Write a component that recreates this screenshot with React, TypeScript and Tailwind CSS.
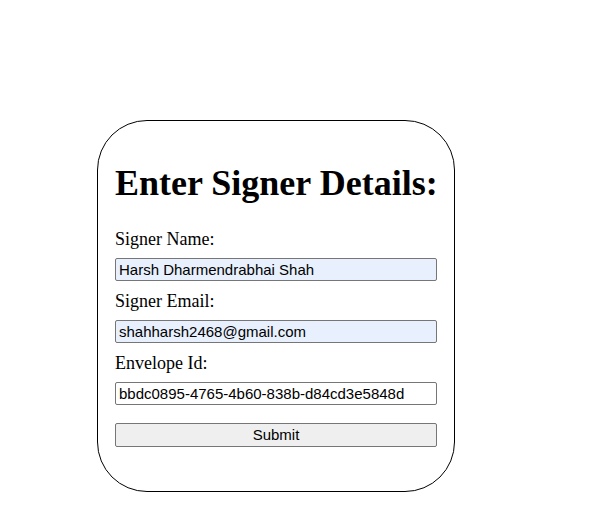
import React from "react";

export default function App() {
  const serif = { fontFamily: '"Liberation Serif", "Times New Roman", serif' };
  const sans = { fontFamily: '"Liberation Sans", Arial, sans-serif' };
  const inputCls =
    "block w-[322px] h-[23px] border border-[#767676] rounded-[2px] px-[3px] text-[15px] leading-[21px] text-black outline-none";
  return (
    <div className="min-h-[523px] bg-white pt-[120px] pl-[97px]">
      <div
        className="w-[358px] h-[372px] border border-black rounded-[50px] px-[17px] pt-[44px] pb-[43px] bg-white flex flex-col"
        style={serif}
      >
        <h1 className="text-[36px] leading-[36px] font-bold text-black m-0 whitespace-nowrap">Enter Signer Details:</h1>
        <div className="mt-[27px] text-[18px] leading-[22px] text-black">Signer Name:</div>
        <input
          className={inputCls + " mt-[8px] bg-[#e8f0fe]"}
          style={sans}
          defaultValue="Harsh Dharmendrabhai Shah"
        />
        <div className="mt-[9px] text-[18px] leading-[22px] text-black">Signer Email:</div>
        <input
          className={inputCls + " mt-[8px] bg-[#e8f0fe]"}
          style={sans}
          defaultValue="shahharsh2468@gmail.com"
        />
        <div className="mt-[9px] text-[18px] leading-[22px] text-black">Envelope Id:</div>
        <input
          className={inputCls + " mt-[8px] bg-white"}
          style={sans}
          defaultValue="bbdc0895-4765-4b60-838b-d84cd3e5848d"
        />
        <button
          className="mt-[18px] w-[322px] h-[24px] border border-[#767676] rounded-[2px] bg-[#efefef] text-[15px] leading-[20px] text-black"
          style={sans}
        >
          Submit
        </button>
      </div>
    </div>
  );
}
